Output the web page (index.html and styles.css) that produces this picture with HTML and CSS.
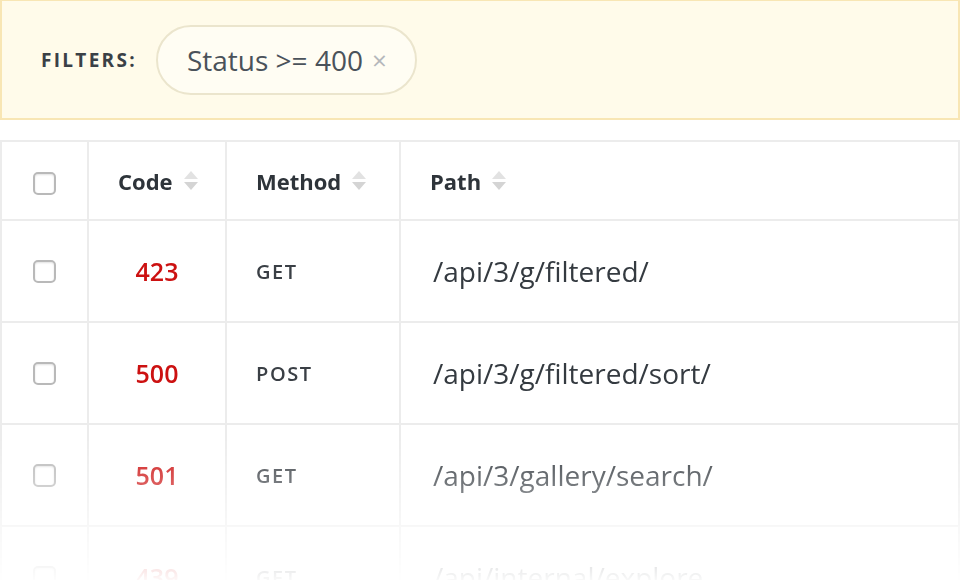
FILE: index.html
```html
<!DOCTYPE html>
<html lang="en">
  <head>
    <meta charset="UTF-8" />
    <meta name="viewport" content="width=device-width, initial-scale=1.0" />
    <title>Requests</title>
    <link rel="stylesheet" href="styles.css">
  </head>
  <body>
    <div class="filters">
      <span class="filters-label">Filters:</span>
      <span class="chip">Status &gt;= 400 <span class="chip-close">&times;</span></span>
    </div>

    <div class="table-wrap">
      <table class="requests">
        <colgroup>
          <col class="w-check" />
          <col class="w-code" />
          <col class="w-method" />
          <col />
        </colgroup>
        <thead>
          <tr>
            <th class="col-check"><span class="checkbox"></span></th>
            <th class="col-code"><span class="sortable">Code <span class="sort"><i class="up"></i><i class="down"></i></span></span></th>
            <th class="col-method"><span class="sortable">Method <span class="sort"><i class="up"></i><i class="down"></i></span></span></th>
            <th class="col-path"><span class="sortable">Path <span class="sort"><i class="up"></i><i class="down"></i></span></span></th>
          </tr>
        </thead>
        <tbody>
          <tr>
            <td class="col-check"><span class="checkbox"></span></td>
            <td class="col-code">423</td>
            <td class="col-method">GET</td>
            <td class="col-path">/api/3/g/filtered/</td>
          </tr>
          <tr>
            <td class="col-check"><span class="checkbox"></span></td>
            <td class="col-code">500</td>
            <td class="col-method">POST</td>
            <td class="col-path">/api/3/g/filtered/sort/</td>
          </tr>
          <tr>
            <td class="col-check"><span class="checkbox"></span></td>
            <td class="col-code">501</td>
            <td class="col-method">GET</td>
            <td class="col-path">/api/3/gallery/search/</td>
          </tr>
          <tr>
            <td class="col-check"><span class="checkbox"></span></td>
            <td class="col-code">439</td>
            <td class="col-method">GET</td>
            <td class="col-path">/api/internal/explore</td>
          </tr>
        </tbody>
      </table>
    </div>
  </body>
</html>
```

FILE: styles.css
```css
body {
  margin: 0;
  padding: 0;
  font-family: "Open Sans", Lato, sans-serif;
  color: #32383e;
  background-color: #fff;
  overflow: hidden;
}

.filters {
  display: flex;
  align-items: center;
  height: 117px;
  padding-left: 39px;
  background-color: #fffbea;
  border: 2px solid #f8e6b4;
  border-top-width: 1px;
}

.filters-label {
  font-size: 19px;
  font-weight: 700;
  letter-spacing: 2.3px;
  text-transform: uppercase;
  color: #3a4046;
  margin-right: 19px;
}

.chip {
  display: inline-flex;
  align-items: center;
  height: 66px;
  padding: 0 28px 0 29px;
  border: 2px solid #ebe5cd;
  border-radius: 40px;
  background-color: #fffdf3;
  font-size: 28px;
  color: #4a525a;
}

.chip-close {
  margin-left: 9px;
  font-size: 26px;
  color: #b5b8bb;
}

.table-wrap {
  margin-top: 20px;
  -webkit-mask-image: linear-gradient(to bottom, #000 0, #000 297px, rgba(0, 0, 0, 0.03) 440px);
  mask-image: linear-gradient(to bottom, #000 0, #000 297px, rgba(0, 0, 0, 0.03) 440px);
}

.requests {
  width: 100%;
  table-layout: fixed;
  border-collapse: collapse;
  border: 2px solid #e6e6e6;
}

.w-check {
  width: 87px;
}

.w-code {
  width: 138px;
}

.w-method {
  width: 174px;
}

.requests th,
.requests td {
  border: 2px solid #ececec;
  padding: 0;
  vertical-align: middle;
  white-space: nowrap;
}

.requests th {
  height: 77px;
  font-size: 22px;
  font-weight: 700;
  text-align: left;
  color: #2e343a;
}

.requests td {
  height: 100px;
}

.col-check {
  text-align: center;
}

.requests th.col-check {
  text-align: center;
}

.requests th.col-code {
  padding-left: 29px;
}

.requests td.col-code {
  text-align: center;
  font-size: 25px;
  font-weight: 600;
  color: #cc1111;
}

.requests th.col-method,
.requests td.col-method {
  padding-left: 29px;
}

.requests td.col-method {
  font-size: 20px;
  font-weight: 600;
  letter-spacing: 1.6px;
  color: #3a3f45;
}

.requests th.col-path {
  padding-left: 29px;
}

.requests td.col-path {
  padding-left: 32px;
  font-size: 28px;
  color: #343a40;
}

.sortable {
  display: inline-flex;
  align-items: center;
}

.sort {
  display: inline-flex;
  flex-direction: column;
  margin-left: 11px;
}

.sort i {
  width: 0;
  height: 0;
  border-left: 7px solid transparent;
  border-right: 7px solid transparent;
}

.sort .up {
  border-bottom: 8px solid #e2e2e2;
  margin-bottom: 3px;
}

.sort .down {
  border-top: 8px solid #d4d4d4;
}

.checkbox {
  display: inline-block;
  width: 19px;
  height: 19px;
  border: 2px solid #b9b9b9;
  border-radius: 5px;
  background-color: #fff;
  box-shadow: inset 0 1px 2px rgba(0, 0, 0, 0.12);
  vertical-align: middle;
}
```
